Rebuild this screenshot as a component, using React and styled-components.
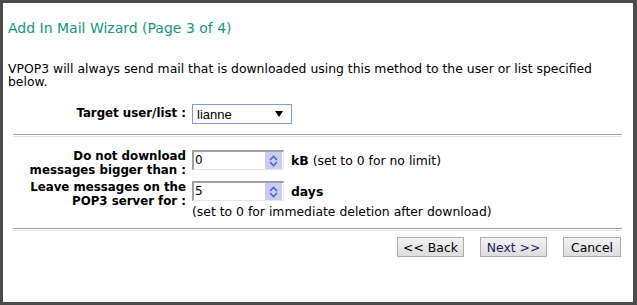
import React from "react";
import styled, { createGlobalStyle } from "styled-components";

const Global = createGlobalStyle`
  html, body { margin: 0; padding: 0; background: #ffffff; }
  body { font-family: "DejaVu Sans", Verdana, sans-serif; }
`;

export const Frame = styled.div`
  box-sizing: border-box;
  width: 637px;
  height: 305px;
  border-style: solid;
  border-color: #4b4b4b;
  border-width: 3px 4px 3px 3px;
  background: #ffffff;
  padding: 17px 5px 0 5px;
  font-size: 12.4px;
  color: #000000;
`;

export const Title = styled.div`
  color: #16967d;
  font-size: 14px;
  line-height: 17px;
  margin-bottom: 25px;
`;

export const Intro = styled.div`
  line-height: 13px;
  margin-bottom: 16px;
`;

export const FormGrid = styled.div`
  display: grid;
  grid-template-columns: 178px auto;
  column-gap: 6px;
  row-gap: ${(p) => p.gap || 4}px;
  align-items: ${(p) => p.align || "center"};
`;

export const Label = styled.div`
  font-weight: bold;
  font-size: 11.8px;
  text-align: right;
  line-height: 13.5px;
`;

export const Rule = styled.div`
  margin: ${(p) => p.margin || "10px 6px 13px 5px"};
  height: 1px;
  border-top: 1px solid #a0a0a0;
  border-bottom: 1px solid #e3e3e3;
`;

export const SelectBox = styled.div`
  box-sizing: border-box;
  width: 100px;
  height: 20px;
  border: 1px solid #7f9ed6;
  display: flex;
  align-items: center;
  justify-content: space-between;
  padding: 0 8px 0 4px;
  font-size: 13px;
  font-family: "Liberation Sans", Arial, sans-serif;
`;

export const Field = styled.div`
  display: flex;
  align-items: center;
  gap: 7px;
`;

export const SpinBox = styled.div`
  box-sizing: border-box;
  width: 92px;
  height: 20px;
  border-style: solid;
  border-width: 2px 1px 1px 2px;
  border-color: #a0a0a0 #e6e6e6 #e6e6e6 #a0a0a0;
  display: flex;
  align-items: stretch;
  background: #ffffff;
`;

export const SpinValue = styled.div`
  flex: 1;
  padding-left: 1px;
  line-height: 17px;
  font-size: 12px;
`;

export const SpinArrows = styled.div`
  width: 17px;
  margin: 0 1px 0 0;
  background: #cacbf7;
  display: flex;
  align-items: center;
  justify-content: center;
`;

export const Unit = styled.span`
  font-weight: bold;
`;

export const Note = styled.div`
  line-height: 13px;
  margin-top: 4px;
`;

export const Buttons = styled.div`
  display: flex;
  justify-content: flex-end;
  gap: 16px;
  padding-right: 7px;
`;

export const Button = styled.button`
  box-sizing: border-box;
  width: ${(p) => p.w}px;
  height: 20px;
  border: 1px solid #acacac;
  background: linear-gradient(#f2f2f2, #dddddd);
  font-family: "DejaVu Sans", Verdana, sans-serif;
  font-size: 12.4px;
  color: ${(p) => p.color || "#000000"};
  padding: 0;
  cursor: pointer;
`;

function Spinner({ value }) {
  return (
    <SpinBox>
      <SpinValue>{value}</SpinValue>
      <SpinArrows>
        <svg width="9" height="12" viewBox="0 0 9 12">
          <path d="M1 5 L4.5 1.5 L8 5" fill="none" stroke="#4a6fa8" strokeWidth="1.6" />
          <path d="M1 7 L4.5 10.5 L8 7" fill="none" stroke="#4a6fa8" strokeWidth="1.6" />
        </svg>
      </SpinArrows>
    </SpinBox>
  );
}

export default function App() {
  return (
    <>
      <Global />
      <Frame>
        <Title>Add In Mail Wizard (Page 3 of 4)</Title>
        <Intro>
          VPOP3 will always send mail that is downloaded using this method to the user or list specified
          below.
        </Intro>
        <FormGrid>
          <Label>Target user/list :</Label>
          <SelectBox>
            <span>lianne</span>
            <svg width="8" height="7" viewBox="0 0 8 7">
              <path d="M0 0 H8 L4 6 Z" fill="#000" />
            </svg>
          </SelectBox>
        </FormGrid>
        <Rule />
        <FormGrid gap={4} align="start">
          <Label>
            Do not download
            <br />
            messages bigger than :
          </Label>
          <Field>
            <Spinner value="0" />
            <span>
              <Unit>kB</Unit> (set to 0 for no limit)
            </span>
          </Field>
          <Label>
            Leave messages on the
            <br />
            POP3 server for :
          </Label>
          <div>
            <Field>
              <Spinner value="5" />
              <Unit>days</Unit>
            </Field>
            <Note>(set to 0 for immediate deletion after download)</Note>
          </div>
        </FormGrid>
        <Rule margin="10px 6px 6px 5px" />
        <Buttons>
          <Button w={67}>&lt;&lt; Back</Button>
          <Button w={67} color="#1a1a5a">Next &gt;&gt;</Button>
          <Button w={58}>Cancel</Button>
        </Buttons>
      </Frame>
    </>
  );
}
